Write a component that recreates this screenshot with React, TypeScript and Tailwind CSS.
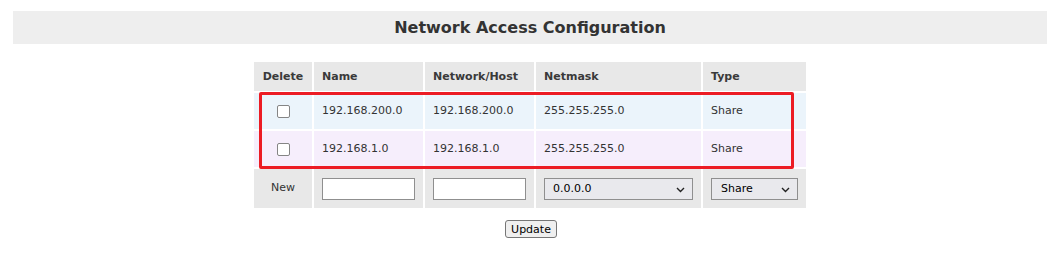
import React from "react";

const font = { fontFamily: '"DejaVu Sans", Verdana, sans-serif' };

function Chevron() {
  return (
    <svg width="9" height="6" viewBox="0 0 9 6" className="pointer-events-none absolute right-[8px] top-[9px]">
      <path d="M1 1 L4.5 4.5 L8 1" fill="none" stroke="#222" strokeWidth="1.4" />
    </svg>
  );
}

function Checkbox() {
  return <div className="h-[13px] w-[13px] rounded-[2px] border-[1.5px] border-[#858585] bg-white" />;
}

export default function App() {
  const rows = [
    { name: "192.168.200.0", net: "192.168.200.0", mask: "255.255.255.0", type: "Share", bg: "bg-[#ebf4fb]" },
    { name: "192.168.1.0", net: "192.168.1.0", mask: "255.255.255.0", type: "Share", bg: "bg-[#f6eefc]" },
  ];
  const head = "bg-[#e8e8e8] flex items-center px-[8px] pt-[2px] font-bold text-[11px] text-[#3a3a3a]";
  return (
    <div className="min-h-[271px] w-[1062px] bg-white pt-[11px] text-[#333]" style={font}>
      <div className="ml-[13px] flex h-[33px] w-[1034px] items-center justify-center bg-[#eeeeee]">
        <span className="pt-[1px] text-[16px] font-bold text-[#333]">Network Access Configuration</span>
      </div>
      <div className="relative ml-[254px] mt-[18px] w-[552px]">
        <div className="grid grid-cols-[58px_109px_109px_165px_103px] gap-[2px] text-[11px]">
          <div className={`${head} h-[29px] justify-center pl-[7px] pr-[7px]`}>Delete</div>
          <div className={head}>Name</div>
          <div className={head}>Network/Host</div>
          <div className={head}>Netmask</div>
          <div className={head}>Type</div>
          {rows.map((r, i) => (
            <React.Fragment key={i}>
              <div className={`${r.bg} flex h-[36px] items-center justify-center pl-[1px]`}>
                <Checkbox />
              </div>
              <div className={`${r.bg} flex items-center px-[8px] pt-[1px]`}>{r.name}</div>
              <div className={`${r.bg} flex items-center px-[8px] pt-[1px]`}>{r.net}</div>
              <div className={`${r.bg} flex items-center px-[8px] pt-[1px]`}>{r.mask}</div>
              <div className={`${r.bg} flex items-center px-[8px] pt-[1px]`}>{r.type}</div>
            </React.Fragment>
          ))}
          <div className="flex h-[39px] items-center justify-center bg-[#e8e8e8]">New</div>
          <div className="flex items-center bg-[#e8e8e8] px-[8px]">
            <input className="h-[22px] w-[93px] border border-[#8f8f8f] bg-white" />
          </div>
          <div className="flex items-center bg-[#e8e8e8] px-[8px]">
            <input className="h-[22px] w-[93px] border border-[#8f8f8f] bg-white" />
          </div>
          <div className="flex items-center bg-[#e8e8e8] px-[8px]">
            <div className="relative">
              <select className="h-[22px] w-[149px] appearance-none border border-[#8f8f8f] bg-[#e9e9ed] py-0 pl-[8px] text-[11px] leading-[20px] text-black">
                <option>0.0.0.0</option>
              </select>
              <Chevron />
            </div>
          </div>
          <div className="flex items-center bg-[#e8e8e8] px-[8px]">
            <div className="relative">
              <select className="h-[22px] w-[87px] appearance-none border border-[#8f8f8f] bg-[#e9e9ed] py-0 pl-[9px] text-[11px] leading-[20px] text-black">
                <option>Share</option>
              </select>
              <Chevron />
            </div>
          </div>
        </div>
        <div className="pointer-events-none absolute left-[5px] top-[30px] h-[77px] w-[535px] rounded-[2px] border-[3px] border-[#ec1c24]" />
      </div>
      <div className="mt-[12px] flex justify-center">
        <button className="h-[18px] rounded-[3px] border border-[#767676] bg-[#efefef] px-[5px] text-[11px] leading-none text-black">
          Update
        </button>
      </div>
    </div>
  );
}
